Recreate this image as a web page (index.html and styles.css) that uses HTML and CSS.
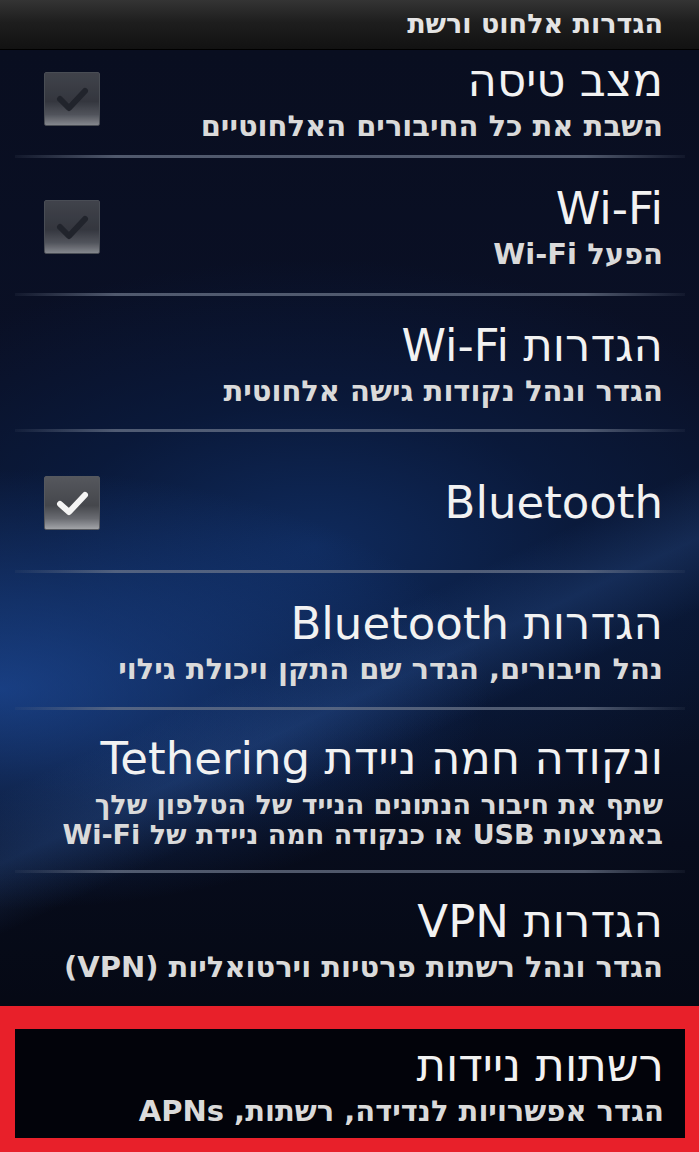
FILE: index.html
```html
<!DOCTYPE html>
<html lang="he" dir="rtl">
<head>
<meta charset="utf-8">
<title>הגדרות אלחוט ורשת</title>
<link rel="stylesheet" href="styles.css">
</head>
<body>
<div class="screen">
  <div class="titlebar">הגדרות אלחוט ורשת</div>
  <div class="list">
    <div class="row row-first">
      <div class="text">
        <div class="title">מצב טיסה</div>
        <div class="sub">השבת את כל החיבורים האלחוטיים</div>
      </div>
      <div class="check dim">
        <svg viewBox="0 0 56 54" width="56" height="54"><path d="M16 27 L25 36 L41 19" fill="none" stroke="#26282e" stroke-width="6" stroke-linecap="round" stroke-linejoin="round"/></svg>
      </div>
    </div>
    <div class="row r2">
      <div class="text">
        <div class="title">Wi-Fi</div>
        <div class="sub">הפעל Wi-Fi</div>
      </div>
      <div class="check dim">
        <svg viewBox="0 0 56 54" width="56" height="54"><path d="M16 27 L25 36 L41 19" fill="none" stroke="#26282e" stroke-width="6" stroke-linecap="round" stroke-linejoin="round"/></svg>
      </div>
    </div>
    <div class="row r3">
      <div class="text">
        <div class="title">הגדרות Wi-Fi</div>
        <div class="sub">הגדר ונהל נקודות גישה אלחוטית</div>
      </div>
    </div>
    <div class="row r4">
      <div class="text">
        <div class="title">Bluetooth</div>
      </div>
      <div class="check on">
        <svg viewBox="0 0 56 54" width="56" height="54"><path d="M16 28 L25 36 L41 19" fill="none" stroke="#f4f4f4" stroke-width="6" stroke-linecap="round" stroke-linejoin="round"/></svg>
      </div>
    </div>
    <div class="row r5">
      <div class="text">
        <div class="title">הגדרות Bluetooth</div>
        <div class="sub">נהל חיבורים, הגדר שם התקן ויכולת גילוי</div>
      </div>
    </div>
    <div class="row r6">
      <div class="text">
        <div class="title">ונקודה חמה ניידת Tethering</div>
        <div class="sub sub-tight">שתף את חיבור הנתונים הנייד של הטלפון שלך<br>באמצעות USB או כנקודה חמה ניידת של Wi-Fi</div>
      </div>
    </div>
    <div class="row r7 last">
      <div class="text">
        <div class="title">הגדרות VPN</div>
        <div class="sub">הגדר ונהל רשתות פרטיות וירטואליות (VPN)</div>
      </div>
    </div>
    <div class="highlight">
      <div class="row inner">
        <div class="text">
          <div class="title">רשתות ניידות</div>
          <div class="sub">הגדר אפשרויות לנדידה, רשתות, APNs</div>
        </div>
      </div>
    </div>
  </div>
</div>
</body>
</html>
```

FILE: styles.css
```css
html, body {
  margin: 0;
  padding: 0;
  background: #050812;
}

.screen {
  width: 699px;
  height: 1152px;
  overflow: hidden;
  font-family: "DejaVu Sans", "Open Sans", sans-serif;
  color: #ececec;
  display: flex;
  flex-direction: column;
}

.titlebar {
  height: 50px;
  flex: none;
  box-sizing: border-box;
  padding: 7px 36px 0 0;
  font-size: 27px;
  font-weight: bold;
  color: #e4e4e4;
  background: linear-gradient(to bottom, #343434 0%, #1e1e1e 45%, #121212 100%);
  border-bottom: 1px solid #000;
  line-height: 34px;
}

.list {
  flex: 1;
  display: flex;
  flex-direction: column;
  background:
    linear-gradient(155deg, rgba(0,0,0,0) 52%, rgba(60,110,190,0.22) 57%, rgba(0,0,0,0) 62%),
    radial-gradient(ellipse 70% 20% at 0% 58%, rgba(35,90,185,0.6), rgba(0,0,0,0) 100%),
    radial-gradient(ellipse 75% 26% at 45% 45%, #0f2a5c 0%, rgba(10,30,70,0.6) 50%, rgba(0,0,0,0) 100%),
    linear-gradient(to bottom, #090e20 0%, #0a1026 30%, #0a1630 50%, #070c1c 72%, #04060e 100%);
}

.row {
  display: flex;
  align-items: center;
  padding: 0 36px 0 44px;
  position: relative;
  flex: none;
}

.row::after {
  content: "";
  position: absolute;
  left: 15px;
  right: 14px;
  bottom: 0;
  height: 3px;
  background: linear-gradient(to right, rgba(90,100,120,0.1), rgba(110,120,140,0.7) 15%, rgba(110,120,140,0.7) 85%, rgba(90,100,120,0.1));
}

.row.last::after, .row.inner::after {
  display: none;
}

.row-first { height: 108px; padding-bottom: 10px; box-sizing: border-box; }
.r2 { height: 138px; }
.r3 { height: 136px; }
.r4 { height: 141px; }
.r5 { height: 137px; }
.r6 { height: 163px; }
.r7 { height: 134px; }

.text {
  flex: 1;
  min-width: 0;
}

.title {
  font-size: 45px;
  line-height: 50px;
  color: #f2f2f2;
  white-space: nowrap;
}

.sub {
  font-size: 29px;
  font-weight: bold;
  line-height: 32px;
  color: #dadada;
  margin-top: 4px;
  white-space: nowrap;
}

.sub-tight {
  font-size: 27px;
  line-height: 30px;
  margin-top: 6px;
}

.check {
  width: 56px;
  height: 54px;
  flex: none;
  box-sizing: border-box;
  border: 1px solid #55585e;
  border-radius: 2px;
  background: linear-gradient(to bottom, #4a4c52 0%, #3c3e44 55%, #5e6066 80%, #9a9ca0 100%);
}

.check svg {
  display: block;
  margin: -1px;
}

.check.dim {
  opacity: 0.85;
}

.check.on {
  background: linear-gradient(to bottom, #55575d 0%, #45474c 55%, #6a6c72 80%, #a2a4a8 100%);
}

.highlight {
  flex: 1;
  border-style: solid;
  border-color: #e8202a;
  border-width: 23px 14px 14px 15px;
  background: #02030a;
  margin-top: -1px;
  display: flex;
}

.row.inner {
  flex: 1;
  padding: 0 21px 0 30px;
  align-items: center;
}
```
